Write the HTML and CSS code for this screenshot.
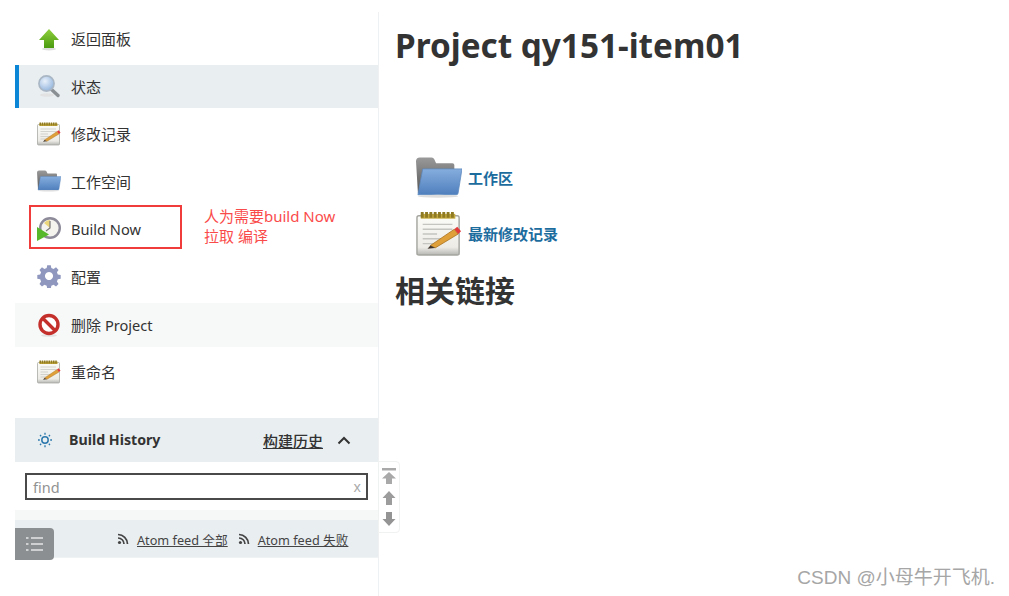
FILE: index.html
```html
<!DOCTYPE html>
<html lang="zh-CN">
<head>
    <meta charset="UTF-8">
    <title>Project qy151-item01</title>
    <link rel="stylesheet" href="styles.css">
</head>
<body>
    <svg class="defs" width="0" height="0">
        <defs>
            <linearGradient id="g-green" x1="0" y1="0" x2="0" y2="1"><stop offset="0" stop-color="#8fd03c"/><stop offset="1" stop-color="#4a9a10"/></linearGradient>
            <linearGradient id="g-folder" x1="0" y1="0" x2="0" y2="1"><stop offset="0" stop-color="#86aede"/><stop offset="1" stop-color="#4f7fbd"/></linearGradient>
            <linearGradient id="g-back" x1="0" y1="0" x2="0" y2="1"><stop offset="0" stop-color="#9a9a9a"/><stop offset="1" stop-color="#555"/></linearGradient>
            <linearGradient id="g-pad" x1="0" y1="0" x2="0" y2="1"><stop offset="0" stop-color="#fbfbf8"/><stop offset="0.8" stop-color="#ecebe6"/><stop offset="1" stop-color="#b5b5b2"/></linearGradient>
            <radialGradient id="g-lens" cx="0.4" cy="0.35" r="0.7"><stop offset="0" stop-color="#e8f0fa"/><stop offset="1" stop-color="#8fb2dc"/></radialGradient>
            <symbol id="i-up" viewBox="0 0 24 24">
                <ellipse cx="12" cy="22" rx="7" ry="1.5" fill="#ddd"/>
                <path d="M12 2 L22 13 H17 V21 H7 V13 H2 Z" fill="url(#g-green)"/>
            </symbol>
            <symbol id="i-search" viewBox="0 0 24 24">
                <ellipse cx="10" cy="21" rx="7" ry="1.8" fill="#e2e2e2"/>
                <path d="M14 15 L21 21.500" stroke="#8a8f94" stroke-width="3.400" stroke-linecap="round"/>
                <circle cx="9.500" cy="9.500" r="7.600" fill="url(#g-lens)" stroke="#a9b6c4" stroke-width="1.600"/>
            </symbol>
            <symbol id="i-notes" viewBox="0 0 48 48">
                <rect x="1" y="5" width="44" height="41" rx="2" fill="url(#g-pad)" stroke="#a5a5a0" stroke-width="1.500"/>
                <rect x="5" y="3" width="36" height="5" fill="#c4a93e"/>
                <path d="M5 4 H41" stroke="#8e7a22" stroke-width="6" stroke-dasharray="3 1.500"/>
                <path d="M7 14 H38 M7 19 H38 M7 24 H22 M7 29 H28 M7 34 H20" stroke="#c4c4c0" stroke-width="1.400"/>
                <path d="M15 36 L40 19 L44 24 L20 38.500 Z" fill="#dfa03a" stroke="#a8701c" stroke-width=".8"/>
                <path d="M15 36 L12 39.500 L20 38.500 Z" fill="#40352a"/>
                <path d="M40 19 L43 16.500 L47 21 L44 24 Z" fill="#e23a3a"/>
            </symbol>
            <symbol id="i-folder" viewBox="0 0 48 42">
                <path d="M0 4 Q0 0 4 0 H16 Q19 0 20 4 L21 6 H38 Q40 6 40 8 V37 H2 Z" fill="url(#g-back)"/>
                <path d="M7 12 H48 L44 37 Q44 39 42 39 H2 Z" fill="url(#g-folder)" stroke="#5d88bd" stroke-width=".8"/>
                <ellipse cx="23" cy="40.500" rx="21" ry="1.500" fill="#ddd"/>
            </symbol>
            <symbol id="i-clock" viewBox="0 0 24 24">
                <circle cx="13" cy="11" r="9.800" fill="#f4f3ee" stroke="#8d8a9a" stroke-width="2.400"/>
                <path d="M13 3 A8 8 0 0 0 7 6 L13 11 Z" fill="#ecd67c"/>
                <path d="M13 4 V11 L9 14" fill="none" stroke="#777" stroke-width="1.200"/>
                <path d="M0 10 L12 17.500 L0 24 Z" fill="#58b82c"/>
            </symbol>
            <symbol id="i-gear" viewBox="0 0 24 24">
                <path d="M12 7.500 a4.500 4.500 0 1 0 .01 0 Z M10 0 h4 l.6 3.200 2.500 1 2.700-1.800 2.800 2.800-1.800 2.700 1 2.500 3.200.6 v4 l-3.200.6-1 2.500 1.800 2.700-2.800 2.800-2.700-1.800-2.500 1-.6 3.200 h-4 l-.6-3.200-2.500-1-2.700 1.800-2.800-2.800 1.800-2.700-1-2.500 -3.200-.6 v-4 l3.200-.6 1-2.500-1.800-2.700 2.800-2.800 2.700 1.800 2.500-1 Z" transform="translate(1.200 1.200) scale(.9)" fill="#8f97bf" fill-rule="evenodd"/>
            </symbol>
            <symbol id="i-stop" viewBox="0 0 24 24">
                <ellipse cx="12" cy="22.500" rx="8" ry="1.300" fill="#e2e2e2"/>
                <circle cx="12" cy="11.500" r="9" fill="#fff" stroke="#c4302b" stroke-width="3.400"/>
                <path d="M5.500 5 L18.500 18" stroke="#c4302b" stroke-width="3.400"/>
            </symbol>
            <symbol id="i-rss" viewBox="0 0 12 12">
                <circle cx="2.500" cy="9.500" r="1.600" fill="#444"/>
                <path d="M1 5 A6 6 0 0 1 7 11 M1 1.500 A9.500 9.500 0 0 1 10.500 11" fill="none" stroke="#444" stroke-width="1.700"/>
            </symbol>
        </defs>
    </svg>

    <div class="page">
        <div class="side">
            <a class="task"><svg class="task-icon"><use href="#i-up"/></svg>返回面板</a>
            <a class="task current"><svg class="task-icon"><use href="#i-search"/></svg>状态</a>
            <a class="task"><svg class="task-icon"><use href="#i-notes"/></svg>修改记录</a>
            <a class="task"><svg class="task-icon"><use href="#i-folder"/></svg>工作空间</a>
            <a class="task"><svg class="task-icon"><use href="#i-clock"/></svg><span class="latin">Build Now</span></a>
            <a class="task"><svg class="task-icon"><use href="#i-gear"/></svg>配置</a>
            <a class="task hovered"><svg class="task-icon"><use href="#i-stop"/></svg>删除&nbsp;<span class="latin">Project</span></a>
            <a class="task"><svg class="task-icon"><use href="#i-notes"/></svg>重命名</a>

            <div class="history">
                <div class="history-head">
                    <svg class="history-icon" viewBox="0 0 16 16">
                        <circle cx="8" cy="8" r="3.200" fill="none" stroke="#2c79ad" stroke-width="1.500"/>
                        <path d="M8 .8 V2.800 M8 13.200 V15.200 M1 8 H2.800 M13.200 8 H15 M3 3 L4.200 4.200 M11.800 11.800 L13 13 M13 3 L11.800 4.200 M4.200 11.800 L3 13" stroke="#2c79ad" stroke-width="1.300"/>
                    </svg>
                    <span class="history-title">Build History</span>
                    <a class="history-trend">构建历史</a>
                    <svg class="history-arrow" viewBox="0 0 14 9"><path d="M1.500 7.500 L7 2 L12.500 7.500" fill="none" stroke="#333" stroke-width="2"/></svg>
                </div>
                <div class="search-row">
                    <div class="search-box"><span class="search-text">find</span><span class="search-x">x</span></div>
                </div>
                <div class="history-strip"></div>
                <div class="feeds">
                    <svg class="rss"><use href="#i-rss"/></svg><a class="feed">Atom feed 全部</a>
                    <svg class="rss second"><use href="#i-rss"/></svg><a class="feed">Atom feed 失败</a>
                </div>
            </div>
        </div>

        <div class="main">
            <h1 class="title">Project qy151-item01</h1>
            <div class="links">
                <div class="link-row first"><svg class="link-icon"><use href="#i-folder"/></svg><a class="link-text">工作区</a></div>
                <div class="link-row second"><svg class="link-icon tall"><use href="#i-notes"/></svg><a class="link-text">最新修改记录</a></div>
            </div>
            <h2 class="sub">相关链接</h2>
        </div>
    </div>

    <!-- annotation drawn on top of the screenshot -->
    <div class="mark-box"></div>
    <div class="mark-text">人为需要build Now<br>拉取 编译</div>

    <div class="side-toggle">
        <svg viewBox="0 0 18 16" width="18" height="16"><path d="M5 2 H17 M5 8 H17 M5 14 H17 M0 2 H2.500 M0 8 H2.500 M0 14 H2.500" stroke="#e4e6e7" stroke-width="1.600"/></svg>
    </div>

    <div class="scroller">
        <svg viewBox="0 0 14 16" width="14" height="16"><path d="M0 0 H14 V2.500 H0 Z M7 4 L14 10.500 H10 V16 H4 V10.500 H0 Z" fill="#a9a9a9"/></svg>
        <svg viewBox="0 0 14 14" width="14" height="14"><path d="M7 0 L13.500 7 H10 V14 H4 V7 H.5 Z" fill="#9c9c9c"/></svg>
        <svg viewBox="0 0 14 14" width="14" height="14"><path d="M7 14 L13.500 7 H10 V0 H4 V7 H.5 Z" fill="#949494"/></svg>
    </div>

    <div class="watermark">CSDN @小母牛开飞机.</div>
</body>
</html>
```

FILE: styles.css
```css
* {
    box-sizing: border-box;
}

html, body {
    height: 100%;
}

body {
    margin: 0;
    background: #fff;
    color: #333;
    font-family: "Noto Sans", "Noto Sans CJK SC", sans-serif;
    overflow: hidden;
}

.defs {
    position: absolute;
}

.page {
    display: flex;
    height: 596px;
    padding-top: 12px;
}

/* left side panel */
.side {
    width: 379px;
    padding: 5px 0 0 15px;
    border-right: 1px solid #eef0f1;
    flex-shrink: 0;
}

.task {
    display: flex;
    align-items: center;
    height: 43px;
    margin-bottom: 4.6px;
    padding-left: 22px;
    font-size: 15px;
    color: #333;
}

.task.current {
    background: #e9eef1;
    border-left: 4px solid #0b85d6;
    padding-left: 18px;
}

.task.hovered {
    background: #f7f8f8;
    height: 44px;
    margin-bottom: 3.6px;
}

.task-icon {
    width: 24px;
    height: 24px;
    margin-right: 10px;
}

.latin {
    font-size: 14.600px;
}

.history {
    margin-top: 25px;
}

.history-head {
    display: flex;
    align-items: center;
    height: 44px;
    padding-left: 22px;
    background: #e9eef1;
}

.history-icon {
    width: 16px;
    height: 16px;
    margin-right: 16px;
}

.history-title {
    font-size: 14.200px;
    font-weight: 700;
    margin-top: -1px;
}

.history-trend {
    margin-left: auto;
    font-size: 15px;
    font-weight: 500;
    text-decoration: underline;
}

.history-arrow {
    width: 14px;
    height: 9px;
    margin: 0 27px 0 14px;
}

.search-row {
    height: 48px;
    padding: 11px 10px 0 10px;
}

.search-box {
    display: flex;
    justify-content: space-between;
    align-items: center;
    height: 27px;
    padding: 0 5px 0 6px;
    border: 2px solid #4a4a4a;
    font-size: 14.500px;
    color: #929292;
}

.search-x {
    font-size: 14px;
    color: #aaa;
}

.history-strip {
    height: 10px;
    background: #f6f8f8;
}

.feeds {
    display: flex;
    align-items: center;
    height: 38px;
    padding-left: 102px;
    background: #e9eef1;
    border-bottom: 1px solid #f0f3f4;
    font-size: 12.700px;
}

.rss {
    width: 12px;
    height: 12px;
    margin-right: 8px;
}

.rss.second {
    margin-left: 10px;
}

.feed {
    color: #444;
    text-decoration: underline;
    margin-top: 2px;
}

/* main column */
.main {
    flex: 1;
    padding-left: 16px;
}

.title {
    margin: 11px 0 0 0;
    font-size: 33.300px;
    line-height: 44px;
    font-weight: 700;
}

.links {
    margin-top: 90px;
    padding-left: 21px;
}

.link-row {
    display: flex;
    align-items: center;
    margin-bottom: 12px;
}

.link-row.first {
    height: 41px;
}

.link-row.second {
    height: 48px;
}

.link-row.second .link-text {
    margin-top: -2px;
}

.link-icon {
    width: 46px;
    height: 41px;
    margin-right: 6px;
}

.link-icon.tall {
    height: 48px;
}

.link-text {
    font-size: 15px;
    font-weight: 700;
    color: #1c6c9e;
}

.sub {
    margin: 0;
    font-size: 30px;
    line-height: 42px;
    font-weight: 700;
}

/* red annotation */
.mark-box {
    position: absolute;
    left: 29px;
    top: 205px;
    width: 153px;
    height: 44px;
    border: 2px solid #f13c3c;
}

.mark-text {
    position: absolute;
    left: 204px;
    top: 206px;
    font-size: 15px;
    line-height: 20px;
    color: #fa4b4b;
}

.side-toggle {
    position: absolute;
    left: 15px;
    top: 528px;
    display: flex;
    align-items: center;
    justify-content: center;
    width: 39px;
    height: 32px;
    background: #8c8f91;
    border-radius: 0 4px 4px 0;
}

.scroller {
    position: absolute;
    left: 378px;
    top: 461px;
    display: flex;
    flex-direction: column;
    align-items: center;
    gap: 7px;
    width: 22px;
    height: 72px;
    padding-top: 6px;
    background: #fff;
    border: 1px solid #f0f1f1;
    border-radius: 0 4px 4px 0;
}

.watermark {
    position: absolute;
    right: 14px;
    top: 562px;
    font-family: "Liberation Sans", "Noto Sans CJK SC", sans-serif;
    font-size: 19px;
    color: #a6a6a6;
}
```
